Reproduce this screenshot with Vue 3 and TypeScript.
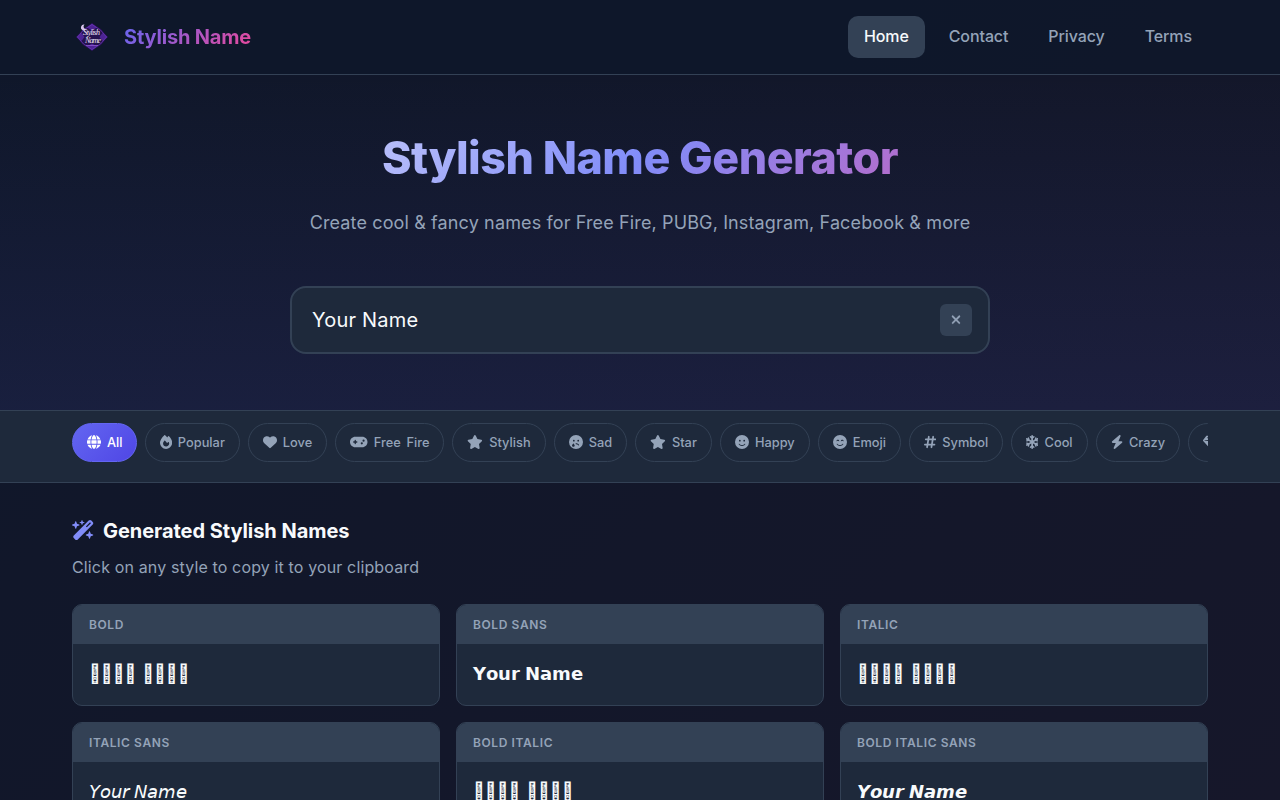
<script setup lang="ts">
import { ref } from 'vue'

interface Icon { w: number; d: string }
interface Category { label: string; icon: string }
interface StyleCard { title: string; text: string; boxed?: boolean }

const icons: Record<string, Icon> = {
  globe: { w: 512, d: 'M352 256c0 22.2-1.2 43.6-3.3 64H163.3c-2.2-20.4-3.3-41.8-3.3-64s1.2-43.6 3.3-64H348.7c2.2 20.4 3.3 41.8 3.3 64zm28.8-64H503.9c5.3 20.5 8.1 41.9 8.1 64s-2.8 43.5-8.1 64H380.8c2.1-20.6 3.2-42 3.2-64s-1.1-43.4-3.2-64zm112.6-32H376.7c-10-63.9-29.8-117.4-55.3-151.6c78.3 20.7 142 77.5 171.9 151.6zm-149.1 0H167.7c6.1-36.4 15.5-68.6 27-94.7c10.5-23.6 22.2-40.7 33.5-51.5C239.4 3.2 248.7 0 256 0s16.6 3.2 27.8 13.8c11.3 10.8 23 27.9 33.5 51.5c11.6 26 20.9 58.2 27 94.7zm-209 0H18.6C48.6 85.9 112.2 29.1 190.6 8.4C165.1 42.6 145.3 96.1 135.3 160zM8.1 192H131.2c-2.1 20.6-3.2 42-3.2 64s1.1 43.4 3.2 64H8.1C2.8 299.5 0 278.1 0 256s2.8-43.5 8.1-64zM194.7 446.6c-11.6-26-20.9-58.2-27-94.6H344.3c-6.1 36.4-15.5 68.6-27 94.6c-10.5 23.6-22.2 40.7-33.5 51.5C272.6 508.8 263.3 512 256 512s-16.6-3.2-27.8-13.8c-11.3-10.8-23-27.9-33.5-51.5zM135.3 352c10 63.9 29.8 117.4 55.3 151.6C112.2 482.9 48.6 426.1 18.6 352H135.3zm358.1 0c-30 74.1-93.6 130.9-171.9 151.6c25.5-34.2 45.2-87.7 55.3-151.6H493.4z' },
  fire: { w: 448, d: 'M159.3 5.4c7.8-7.3 19.9-7.2 27.7 .1c27.6 25.9 53.5 53.8 77.7 84c11-14.4 23.5-30.1 37-42.9c7.9-7.4 20.1-7.4 28 .1c34.6 33 63.9 76.6 84.5 118c20.3 40.8 33.8 82.5 33.8 111.9C448 404.2 348.2 512 224 512C98.4 512 0 404.1 0 276.5c0-38.4 17.8-85.3 45.4-131.7C73.3 97.7 112.7 48.6 159.3 5.4zM225.7 416c25.3 0 47.7-7 68.8-21c42.1-29.4 53.4-88.2 28.1-134.4c-4.5-9-16-9.6-22.5-2l-25.2 29.3c-6.6 7.6-18.5 7.4-24.7-.5c-16.5-21-46-58.5-62.8-79.8c-6.3-8-18.3-8.1-24.7-.1c-33.8 42.5-50.8 69.3-50.8 99.4C112 375.4 162.6 416 225.7 416z' },
  heart: { w: 512, d: 'M47.6 300.4L228.3 469.1c7.5 7 17.4 10.9 27.7 10.9s20.2-3.9 27.7-10.9L464.4 300.4c30.4-28.3 47.6-68 47.6-109.5v-5.8c0-69.9-50.5-129.5-119.4-141C347 36.5 300.6 51.4 268 84L256 96 244 84c-32.6-32.6-79-47.5-124.6-39.9C50.5 55.6 0 115.2 0 185.1v5.8c0 41.5 17.2 81.2 47.6 109.5z' },
  gamepad: { w: 640, d: 'M192 64C86 64 0 150 0 256S86 448 192 448H448c106 0 192-86 192-192s-86-192-192-192H192zM496 168a40 40 0 1 1 0 80 40 40 0 1 1 0-80zM392 304a40 40 0 1 1 80 0 40 40 0 1 1 -80 0zM168 200c0-13.3 10.7-24 24-24s24 10.7 24 24v32h32c13.3 0 24 10.7 24 24s-10.7 24-24 24H216v32c0 13.3-10.7 24-24 24s-24-10.7-24-24V280H136c-13.3 0-24-10.7-24-24s10.7-24 24-24h32V200z' },
  star: { w: 576, d: 'M316.9 18C311.6 7 300.4 0 288.1 0s-23.4 7-28.8 18L195 150.3 51.4 171.5c-12 1.8-22 10.2-25.7 21.7s-.7 24.2 7.9 32.7L137.8 329 113.2 474.7c-2 12 3 24.2 12.9 31.3s23 8 33.8 2.3l128.3-68.5 128.3 68.5c10.8 5.7 23.9 4.9 33.8-2.3s14.9-19.3 12.9-31.3L438.5 329 542.7 225.9c8.6-8.5 11.7-21.2 7.9-32.7s-13.7-19.9-25.7-21.7L381.2 150.3 316.9 18z' },
  sad: { w: 512, d: 'M256 0a256 256 0 1 0 0 512a256 256 0 1 0 0-512zM176.4 176a32 32 0 1 1 0 64a32 32 0 1 1 0-64zM336.4 176a32 32 0 1 1 0 64a32 32 0 1 1 0-64zM256 304c50 0 87 22 108 49c15 20-11 36-25 20c-17-21-45-37-83-37c-21 0-21-32 0-32zM160 300c24 31 48 66 48 84c0 27-21 48-48 48s-48-21-48-48c0-18 24-53 48-84z' },
  smile: { w: 512, d: 'M256 512A256 256 0 1 0 256 0a256 256 0 1 0 0 512zM164.1 325.5C182 346.2 212.6 368 256 368s74-21.8 91.9-42.5c5.8-6.7 15.9-7.4 22.6-1.6s7.4 15.9 1.6 22.6C349.8 372.1 311.1 400 256 400s-93.8-27.9-116.1-53.5c-5.8-6.7-5.1-16.8 1.6-22.6s16.8-5.1 22.6 1.6zM144.4 208a32 32 0 1 1 64 0 32 32 0 1 1 -64 0zm192-32a32 32 0 1 1 0 64 32 32 0 1 1 0-64z' },
  beam: { w: 512, d: 'M256 512A256 256 0 1 0 256 0a256 256 0 1 0 0 512zM164.1 325.5C182 346.2 212.6 368 256 368s74-21.8 91.9-42.5c5.8-6.7 15.9-7.4 22.6-1.6s7.4 15.9 1.6 22.6C349.8 372.1 311.1 400 256 400s-93.8-27.9-116.1-53.5c-5.8-6.7-5.1-16.8 1.6-22.6s16.8-5.1 22.6 1.6zM217.6 228.8c-21-28-61-28-80 0c-5 7-14 1-11-7c12-68 91-68 102 0c2 8-7 14-11 7zM377.6 228.8c-21-28-61-28-80 0c-5 7-14 1-11-7c12-68 91-68 102 0c2 8-7 14-11 7z' },
  hashtag: { w: 448, d: 'M181.3 32.4c17.4 2.9 29.2 19.4 26.3 36.8L197.8 128h95.1l11.5-69.3c2.9-17.4 19.4-29.2 36.8-26.3s29.2 19.4 26.3 36.8L357.8 128H416c17.7 0 32 14.3 32 32s-14.3 32-32 32H347.1L325.8 320H384c17.7 0 32 14.3 32 32s-14.3 32-32 32H315.1l-11.5 69.3c-2.9 17.4-19.4 29.2-36.8 26.3s-29.2-19.4-26.3-36.8l9.8-58.7H155.1l-11.5 69.3c-2.9 17.4-19.4 29.2-36.8 26.3s-29.2-19.4-26.3-36.8L90.2 384H32c-17.7 0-32-14.3-32-32s14.3-32 32-32h68.9l21.3-128H64c-17.7 0-32-14.3-32-32s14.3-32 32-32h68.9l11.5-69.3c2.9-17.4 19.4-29.2 36.8-26.3zM187.1 192L165.8 320h95.1l21.3-128H187.1z' },
  snow: { w: 448, d: 'M224 0c17.7 0 32 14.3 32 32V62.1l15-15c9.4-9.4 24.6-9.4 33.9 0s9.4 24.6 0 33.9l-49 49v70.3l61.4-35.8 17.7-66.1c3.4-12.8 16.6-20.4 29.4-17s20.4 16.6 17 29.4l-5.2 19.3 23.6-13.8c15.3-8.9 34.9-3.7 43.8 11.5s3.8 34.9-11.5 43.8l-25.3 14.8 21.7 5.8c12.8 3.4 20.4 16.6 17 29.4s-16.6 20.4-29.4 17l-67.7-18.1L287.5 256l60.9 35.5 67.7-18.1c12.8-3.4 26 4.2 29.4 17s-4.2 26-17 29.4l-21.7 5.8 25.3 14.8c15.3 8.9 20.4 28.5 11.5 43.8s-28.5 20.4-43.8 11.5l-23.6-13.8 5.2 19.3c3.4 12.8-4.2 26-17 29.4s-26-4.2-29.4-17l-17.7-66.1L256 311.7v70.3l49 49c9.4 9.4 9.4 24.6 0 33.9s-24.6 9.4-33.9 0l-15-15V480c0 17.7-14.3 32-32 32s-32-14.3-32-32V449.9l-15 15c-9.4 9.4-24.6 9.4-33.9 0s-9.4-24.6 0-33.9l49-49V311.7l-61.4 35.8-17.7 66.1c-3.4 12.8-16.6 20.4-29.4 17s-20.4-16.6-17-29.4l5.2-19.3L48.1 395.6c-15.3 8.9-34.9 3.7-43.8-11.5s-3.7-34.9 11.5-43.8l25.3-14.8-21.7-5.8c-12.8-3.4-20.4-16.6-17-29.4s16.6-20.4 29.4-17l67.7 18.1L160.5 256 99.6 220.5 31.9 238.6c-12.8 3.4-26-4.2-29.4-17s4.2-26 17-29.4l21.7-5.8L15.9 171.6C.6 162.7-4.5 143.1 4.4 127.9s28.5-20.4 43.8-11.5l23.6 13.8-5.2-19.3c-3.4-12.8 4.2-26 17-29.4s26 4.2 29.4 17l17.7 66.1L192 200.3V129.9L143 81c-9.4-9.4-9.4-24.6 0-33.9s24.6-9.4 33.9 0l15 15V32c0-17.7 14.3-32 32-32z' },
  bolt: { w: 448, d: 'M349.4 44.6c5.9-13.7 1.5-29.7-10.6-38.5s-28.6-8-39.9 1.8l-256 224c-10 8.8-13.6 22.9-8.9 35.3S50.7 288 64 288H175.5L98.6 467.4c-5.9 13.7-1.5 29.7 10.6 38.5s28.6 8 39.9-1.8l256-224c10-8.8 13.6-22.9 8.9-35.3s-16.6-20.7-30-20.7H272.5L349.4 44.6z' },
  gem: { w: 512, d: 'M116.7 33.8c4.5-6.1 11.7-9.8 19.3-9.8H376c7.6 0 14.8 3.6 19.3 9.8l112 152c6.8 9.2 6.1 21.9-1.5 30.4l-232 256c-4.5 5-11 7.9-17.8 7.9s-13.2-2.9-17.8-7.9l-232-256c-7.7-8.5-8.3-21.2-1.5-30.4l112-152zm38.5 39.8c-3.3 2.5-4.2 7-2.1 10.5l57.4 95.6L63.3 192c-4.1 .3-7.3 3.8-7.3 8s3.2 7.6 7.3 8l192 16c.4 0 .9 0 1.3 0l192-16c4.1-.3 7.3-3.8 7.3-8s-3.2-7.6-7.3-8L301.5 179.8l57.4-95.6c2.1-3.5 1.2-8.1-2.1-10.5s-7.9-2-10.7 1L256 172.2 165.9 74.6c-2.8-3-7.4-3.4-10.7-1z' },
  wand: { w: 576, d: 'M234.7 42.7L197 56.8c-3 1.1-5 4-5 7.2s2 6.1 5 7.2l37.7 14.1L248.8 123c1.1 3 4 5 7.2 5s6.1-2 7.2-5l14.1-37.7L315 71.2c3-1.1 5-4 5-7.2s-2-6.1-5-7.2L277.3 42.7 263.2 5c-1.1-3-4-5-7.2-5s-6.1 2-7.2 5L234.7 42.7zM46.1 395.4c-18.7 18.7-18.7 49.1 0 67.9l34.6 34.6c18.7 18.7 49.1 18.7 67.9 0L529.9 116.5c18.7-18.7 18.7-49.1 0-67.9L495.3 14.1c-18.7-18.7-49.1-18.7-67.9 0L46.1 395.4zM484.6 82.6l-105 105-23.3-23.3 105-105 23.3 23.3zM7.5 117.2C3 118.9 0 123.2 0 128s3 9.1 7.5 10.8L64 160l21.2 56.5c1.7 4.5 6 7.5 10.8 7.5s9.1-3 10.8-7.5L128 160l56.5-21.2c4.5-1.7 7.5-6 7.5-10.8s-3-9.1-7.5-10.8L128 96 106.8 39.5C105.1 35 100.8 32 96 32s-9.1 3-10.8 7.5L64 96 7.5 117.2zm352 256c-4.5 1.7-7.5 6-7.5 10.8s3 9.1 7.5 10.8L416 416l21.2 56.5c1.7 4.5 6 7.5 10.8 7.5s9.1-3 10.8-7.5L480 416l56.5-21.2c4.5-1.7 7.5-6 7.5-10.8s-3-9.1-7.5-10.8L480 352l-21.2-56.5c-1.7-4.5-6-7.5-10.8-7.5s-9.1 3-10.8 7.5L416 352l-56.5 21.2z' },
  xmark: { w: 384, d: 'M342.6 150.6c12.5-12.5 12.5-32.8 0-45.3s-32.8-12.5-45.3 0L192 210.7 86.6 105.4c-12.5-12.5-32.8-12.5-45.3 0s-12.5 32.8 0 45.3L146.7 256 41.4 361.4c-12.5 12.5-12.5 32.8 0 45.3s32.8 12.5 45.3 0L192 301.3 297.4 406.6c12.5 12.5 32.8 12.5 45.3 0s12.5-32.8 0-45.3L237.3 256 342.6 150.6z' }
}

const navItems = ['Home', 'Contact', 'Privacy', 'Terms']
const activeNav = ref('Home')

const categories: Category[] = [
  { label: 'All', icon: 'globe' },
  { label: 'Popular', icon: 'fire' },
  { label: 'Love', icon: 'heart' },
  { label: 'Free Fire', icon: 'gamepad' },
  { label: 'Stylish', icon: 'star' },
  { label: 'Sad', icon: 'sad' },
  { label: 'Star', icon: 'star' },
  { label: 'Happy', icon: 'smile' },
  { label: 'Emoji', icon: 'beam' },
  { label: 'Symbol', icon: 'hashtag' },
  { label: 'Cool', icon: 'snow' },
  { label: 'Crazy', icon: 'bolt' },
  { label: '', icon: 'gem' }
]
const activeCategory = ref('All')

const name = ref('Your Name')

// Shifts Latin letters into a block of the mathematical alphanumeric symbols.
function shift(text: string, upper: number): string {
  return Array.from(text)
    .map((ch) => {
      const c = ch.charCodeAt(0)
      if (c >= 65 && c <= 90) return String.fromCodePoint(upper + c - 65)
      if (c >= 97 && c <= 122) return String.fromCodePoint(upper + 26 + c - 97)
      return ch
    })
    .join('')
}

// Styles without a glyph set show one placeholder box per letter.
function placeholder(text: string): string {
  return text.replace(/\S/g, '\u{F0123}')
}

const base = name.value
const cards: StyleCard[] = [
  { title: 'Bold', text: placeholder(base), boxed: true },
  { title: 'Bold Sans', text: shift(base, 0x1d5d4) },
  { title: 'Italic', text: placeholder(base), boxed: true },
  { title: 'Italic Sans', text: shift(base, 0x1d608) },
  { title: 'Bold Italic', text: placeholder(base), boxed: true },
  { title: 'Bold Italic Sans', text: shift(base, 0x1d63c) }
]
</script>

<template>
  <div class="page">
    <header class="header">
      <div class="container header-row">
        <div class="brand">
          <svg class="logo" viewBox="0 0 40 40">
            <path d="M20 6L29 12L36 20L29 28L20 34L11 28L4 20L11 12z" fill="#25124f" />
            <path d="M20 6.500l5 4-5 3-5-3zM20 33.500l5-4-5-3-5 3zM4.500 20l5-4 3 4-3 4zM35.500 20l-5-4-3 4 3 4z" fill="#4d2494" />
            <path d="M20 7.500L28.500 13L34.500 20L28.500 27L20 32.500L11.500 27L5.500 20L11.500 13z" fill="none" stroke="#6a35b8" stroke-width="0.8" />
            <path d="M12.500 7.500a3 3 0 1 0 2 4.600a2.600 2.600 0 0 1-2-4.600z" fill="#d8c6ec" />
            <text x="11" y="18" class="logo-text" textLength="17">Stylish</text>
            <text x="13" y="25.500" class="logo-text" textLength="16">Name</text>
            <path d="M14 28.500h12" stroke="#8a55cc" stroke-width="0.9" />
          </svg>
          <span class="brand-name">Stylish Name</span>
        </div>
        <nav class="nav">
          <a v-for="item in navItems" :key="item" class="nav-link" :class="{ active: item === activeNav }" @click="activeNav = item">{{ item }}</a>
        </nav>
      </div>
    </header>

    <section class="hero">
      <div class="container">
        <h1 class="title">Stylish Name Generator</h1>
        <p class="subtitle">Create cool &amp; fancy names for Free Fire, PUBG, Instagram, Facebook &amp; more</p>
        <div class="field">
          <input v-model="name" class="input" type="text" />
          <button class="clear" @click="name = ''">
            <svg class="icon xmark" :viewBox="`0 0 ${icons.xmark.w} 512`" :style="{ width: icons.xmark.w / 512 + 'em' }"><path :d="icons.xmark.d" /></svg>
          </button>
        </div>
      </div>
    </section>

    <section class="tabs">
      <div class="container">
        <div class="tab-row">
          <button v-for="c in categories" :key="c.label" class="tab" :class="{ active: c.label === activeCategory }" @click="activeCategory = c.label">
            <svg class="icon" :viewBox="`0 0 ${icons[c.icon].w} 512`" :style="{ width: icons[c.icon].w / 512 + 'em' }"><path fill-rule="evenodd" :d="icons[c.icon].d" /></svg>
            <span>{{ c.label }}</span>
          </button>
        </div>
      </div>
    </section>

    <main class="container results">
      <h2 class="heading">
        <svg class="icon wand" :viewBox="`0 0 ${icons.wand.w} 512`" :style="{ width: icons.wand.w / 512 + 'em' }"><path :d="icons.wand.d" /></svg>
        Generated Stylish Names
      </h2>
      <p class="hint">Click on any style to copy it to your clipboard</p>
      <div class="grid">
        <article v-for="card in cards" :key="card.title" class="card">
          <div class="card-head">{{ card.title }}</div>
          <div class="card-body" :class="{ boxed: card.boxed }">{{ card.text }}</div>
        </article>
      </div>
    </main>
  </div>
</template>

<style>
html,
body {
  margin: 0;
  background: #0f172a;
}
</style>

<style scoped>
* {
  box-sizing: border-box;
}
.page {
  height: 800px;
  overflow: hidden;
  font-family: Inter, sans-serif;
  font-size: 16px;
  line-height: 1.6;
  color: #f8fafc;
  background: linear-gradient(135deg, #0f172a 0%, #16172a 100%);
}
.container {
  width: 1136px;
  margin: 0 auto;
}
.header {
  height: 75px;
  background: rgba(15, 23, 42, 0.95);
  border-bottom: 1px solid #334155;
}
.header-row {
  height: 74px;
  display: flex;
  align-items: center;
  justify-content: space-between;
}
.brand {
  display: flex;
  align-items: center;
  gap: 12px;
}
.logo {
  width: 40px;
  height: 40px;
}
.logo-text {
  font: italic 400 8px "Liberation Serif", serif;
  fill: #efe6fa;
}
.brand-name {
  font-size: 20px;
  font-weight: 700;
  letter-spacing: -0.18px;
  background: linear-gradient(135deg, #6366f1, #ec4899);
  background-clip: text;
  color: transparent;
}
.nav {
  display: flex;
  gap: 8px;
}
.nav-link {
  padding: 8px 16px;
  border-radius: 10px;
  font-weight: 500;
  letter-spacing: -0.1px;
  color: #94a3b8;
}
.nav-link.active {
  color: #f8fafc;
  background: #334155;
}
.hero {
  height: 335px;
  padding-top: 47px;
  background: linear-gradient(180deg, rgba(15, 23, 42, 0) 0%, rgba(99, 102, 241, 0.1) 100%);
  text-align: center;
}
.title {
  margin: 0 0 14px;
  font-size: 44.8px;
  font-weight: 800;
  line-height: 72px;
  letter-spacing: -0.5px;
  background: linear-gradient(135deg, #f8fafc 0%, #818cf8 50%, #ec4899 100%);
  background-clip: text;
  color: transparent;
}
.subtitle {
  margin: 0 0 49px;
  font-size: 18px;
  line-height: 29px;
  letter-spacing: 0.13px;
  color: #94a3b8;
}
.field {
  width: 700px;
  height: 68px;
  margin: 0 auto;
  padding: 0 16px 0 20px;
  display: flex;
  align-items: center;
  border: 2px solid #334155;
  border-radius: 16px;
  background: #1e293b;
}
.input {
  flex: 1;
  min-width: 0;
  padding: 0;
  border: 0;
  outline: 0;
  background: none;
  color: #f8fafc;
  font: 400 20px Inter, sans-serif;
  letter-spacing: 0.2px;
}
.clear {
  width: 32px;
  height: 32px;
  padding: 0 0 1px;
  border: 0;
  border-radius: 6px;
  background: #334155;
  color: #94a3b8;
  display: flex;
  align-items: center;
  justify-content: center;
  font-size: 13.33px;
}
.icon {
  height: 1em;
  flex: none;
  fill: currentColor;
}
.xmark {
  stroke: currentColor;
  stroke-width: 10;
}
.tabs {
  height: 73px;
  padding-top: 12px;
  border-top: 1px solid #334155;
  border-bottom: 1px solid #334155;
  background: #1e293b;
}
.tab-row {
  display: flex;
  gap: 8px;
  overflow: hidden;
}
.tab {
  flex: none;
  height: 39px;
  padding: 0 14px 1px;
  display: flex;
  align-items: center;
  gap: 6px;
  border: 1px solid #334155;
  border-radius: 20px;
  background: none;
  color: #94a3b8;
  font: 500 12.8px Inter, sans-serif;
  letter-spacing: 0.015px;
  word-spacing: 2.2px;
}
.tab .icon {
  font-size: 14px;
}
.tab.active {
  padding-right: 13px;
  color: #fff;
  border-color: #6366f1;
  background: linear-gradient(135deg, #6366f1, #4f46e5);
}
.results {
  padding-top: 32px;
}
.heading {
  margin: 0 0 8px;
  height: 32px;
  display: flex;
  align-items: center;
  gap: 8.5px;
  font-size: 20px;
  font-weight: 700;
  letter-spacing: -0.05px;
}
.wand {
  margin-bottom: 2px;
  color: #818cf8;
}
.hint {
  margin: 0 0 23px;
  letter-spacing: 0.14px;
  color: #94a3b8;
}
.grid {
  display: grid;
  grid-template-columns: repeat(3, 1fr);
  gap: 16px;
}
.card {
  height: 102px;
  overflow: hidden;
  border: 1px solid #334155;
  border-radius: 10px;
  background: #1e293b;
}
.card-head {
  height: 39px;
  padding: 0 16px;
  line-height: 40px;
  background: #334155;
  color: #94a3b8;
  font-size: 12px;
  font-weight: 600;
  letter-spacing: 0.6px;
  text-transform: uppercase;
}
.card-body {
  padding: 16px;
  font-size: 18px;
  font-weight: 500;
  line-height: 1.6;
}
.boxed {
  word-spacing: 1.2px;
}
</style>
